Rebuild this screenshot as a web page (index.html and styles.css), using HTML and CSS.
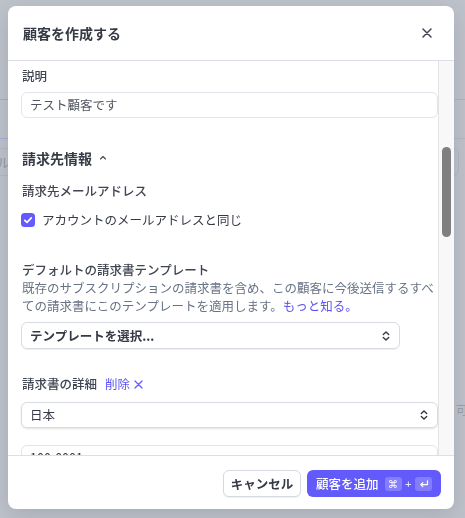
FILE: index.html
```html
<!DOCTYPE html>
<html lang="ja">
<head>
<meta charset="utf-8">
<title>顧客を作成する</title>
<link rel="stylesheet" href="styles.css">
</head>
<body>
<div class="page">
  <div class="bg-rule bg-rule-1"></div>
  <div class="bg-rule bg-rule-2"></div>
  <div class="bg-field">メール</div>
  <div class="bg-note">可</div>
</div>

<div class="modal">
  <header class="modal-header">
    <h1 class="modal-title">顧客を作成する</h1>
    <button class="close-btn" aria-label="閉じる">
      <svg width="10" height="10" viewBox="0 0 10 10"><path d="M1 1L9 9M9 1L1 9" stroke="#414552" stroke-width="1.5" stroke-linecap="round" fill="none"/></svg>
    </button>
  </header>

  <div class="modal-body">
    <div class="scroll-content">
      <div class="field-label">説明</div>
      <div class="text-input">テスト顧客です</div>

      <div class="section-heading">請求先情報
        <svg class="chev-up" width="8" height="5" viewBox="0 0 8 5"><path d="M1.5 4L4 1.5L6.5 4" stroke="#414552" stroke-width="1.1" fill="none" stroke-linecap="round" stroke-linejoin="round"/></svg>
      </div>

      <div class="field-label label-email">請求先メールアドレス</div>
      <label class="check-row">
        <span class="checkbox">
          <svg width="14" height="14" viewBox="0 0 14 14"><path d="M3.8 7.3L6 9.4L10.3 4.8" stroke="#fff" stroke-width="1.7" fill="none" stroke-linecap="round" stroke-linejoin="round"/></svg>
        </span>
        <span class="check-text">アカウントのメールアドレスと同じ</span>
      </label>

      <div class="field-label label-template">デフォルトの請求書テンプレート</div>
      <p class="desc">既存のサブスクリプションの請求書を含め、この顧客に今後送信するすべ<br>ての請求書にこのテンプレートを適用します。<span class="link">もっと知る。</span></p>
      <div class="select select-template">
        <span class="select-text strong">テンプレートを選択...</span>
        <svg class="updown" width="8" height="12" viewBox="0 0 8 12"><path d="M1.3 4.6L4 1.9L6.7 4.6M1.3 7.4L4 10.1L6.7 7.4" stroke="#353a44" stroke-width="1.4" fill="none" stroke-linecap="round" stroke-linejoin="round"/></svg>
      </div>

      <div class="details-row">
        <span class="field-label">請求書の詳細</span>
        <span class="link remove">削除</span>
        <svg class="remove-x" width="9" height="9" viewBox="0 0 9 9"><path d="M1 1L8 8M8 1L1 8" stroke="#635bff" stroke-width="1.3" stroke-linecap="round" fill="none"/></svg>
      </div>
      <div class="select select-country">
        <span class="select-text">日本</span>
        <svg class="updown" width="8" height="12" viewBox="0 0 8 12"><path d="M1.3 4.6L4 1.9L6.7 4.6M1.3 7.4L4 10.1L6.7 7.4" stroke="#353a44" stroke-width="1.4" fill="none" stroke-linecap="round" stroke-linejoin="round"/></svg>
      </div>
      <div class="text-input postal">100-0001</div>
    </div>
    <div class="scrollbar"><div class="thumb"></div></div>
  </div>

  <footer class="modal-footer">
    <button class="btn btn-secondary">キャンセル</button>
    <button class="btn btn-primary">
      <span class="btn-label">顧客を追加</span>
      <span class="kbd kbd-cmd">⌘</span>
      <span class="plus">+</span>
      <span class="kbd">
        <svg width="10" height="8" viewBox="0 0 10 8"><path d="M8.5 0.8V4.6H1.8M3.8 2.6L1.8 4.6L3.8 6.6" stroke="#fff" stroke-width="1.2" fill="none" stroke-linecap="round" stroke-linejoin="round"/></svg>
      </span>
    </button>
  </footer>
</div>
</body>
</html>
```

FILE: styles.css
```css
* {
  box-sizing: border-box;
  margin: 0;
  padding: 0;
}

html, body {
  width: 465px;
  height: 518px;
  overflow: hidden;
}

body {
  background: #bec3cb;
  font-family: "Noto Sans CJK JP", "Noto Sans", sans-serif;
  font-size: 12.5px;
  color: #353a44;
}

/* page behind the overlay */
.page {
  height: 518px;
  display: flex;
  flex-direction: column;
}

.bg-rule {
  height: 1px;
  flex: none;
}

.bg-rule-1 {
  margin-top: 99px;
  background: linear-gradient(to right, #a6a9d6 0, #a6a9d6 40px, #b0b5be 40px);
}

.bg-rule-2 {
  margin-top: 38px;
  background: linear-gradient(to right, #aaadd4 0, #aaadd4 40px, #b3b8c1 40px);
}

.bg-field {
  flex: none;
  margin-top: 9px;
  margin-left: -40px;
  width: 499px;
  height: 28px;
  border: 1px solid #b3b8c1;
  border-radius: 6px;
  color: #959ba6;
  font-size: 13px;
  line-height: 26px;
  padding-left: 10px;
}

.bg-note {
  flex: none;
  margin-top: 227px;
  margin-left: 456px;
  color: #99a0ab;
  font-size: 12px;
  line-height: 14px;
}

/* modal */
.modal {
  position: fixed;
  left: 8px;
  top: 6px;
  width: 446px;
  height: 503px;
  background: #fff;
  border-radius: 8px;
  display: flex;
  flex-direction: column;
  overflow: hidden;
  box-shadow: 0 6px 22px rgba(40, 45, 60, 0.16);
}

.modal-header {
  flex: none;
  height: 55px;
  display: flex;
  align-items: center;
  justify-content: space-between;
  padding: 0 22px 0 15px;
  border-bottom: 1px solid #dcdfe5;
}

.modal-title {
  font-size: 14px;
  font-weight: 700;
  line-height: 20px;
  color: #353a44;
}

.close-btn {
  border: 0;
  background: none;
  width: 10px;
  height: 10px;
  display: flex;
}

.modal-body {
  flex: 1;
  min-height: 0;
  display: flex;
}

.scroll-content {
  flex: 1;
  min-width: 0;
  overflow: hidden;
  padding: 6px 0 0 13px;
  display: flex;
  flex-direction: column;
}

.scrollbar {
  flex: none;
  width: 16px;
  background: #f8f8f8;
  border-left: 1px solid #e4e4e4;
}

.thumb {
  margin-top: 86px;
  margin-left: 3px;
  width: 9px;
  height: 90px;
  border-radius: 5px;
  background: #7f7f7f;
}

.field-label {
  flex: none;
  line-height: 18px;
  padding-left: 1px;
  color: #414552;
  font-weight: 500;
}

.text-input {
  flex: none;
  margin-top: 7px;
  height: 26px;
  border: 1px solid #e1e4e9;
  border-radius: 6px;
  padding-left: 8px;
  line-height: 24px;
  color: #50555f;
  font-size: 12.5px;
}

.section-heading {
  flex: none;
  margin-top: 30px;
  line-height: 20px;
  font-size: 14px;
  font-weight: 700;
  color: #353a44;
  padding-left: 1px;
  display: flex;
  align-items: center;
}

.chev-up {
  margin-left: 7px;
  margin-top: -2px;
}

.label-email {
  margin-top: 14px;
}

.check-row {
  flex: none;
  margin-top: 11px;
  height: 18px;
  display: flex;
  align-items: center;
  gap: 7px;
}

.checkbox {
  width: 14px;
  height: 14px;
  border-radius: 3.5px;
  background: #635bff;
  display: flex;
}

.check-text {
  line-height: 18px;
  color: #353a44;
}

.label-template {
  margin-top: 32px;
}

.desc {
  flex: none;
  line-height: 18px;
  padding-left: 1px;
  color: #687385;
}

.link {
  color: #5b54f5;
}

.select {
  flex: none;
  margin-top: 7px;
  height: 27px;
  border: 1px solid #d8dce2;
  border-radius: 6px;
  padding: 0 9px 0 8px;
  display: flex;
  align-items: center;
  justify-content: space-between;
  box-shadow: 0 1px 1px rgba(0, 0, 0, 0.07);
}

.select-template {
  width: 379px;
}

.select-text {
  line-height: 18px;
  color: #353a44;
}

.select-text.strong {
  font-weight: 700;
}

.details-row {
  flex: none;
  margin-top: 26px;
  height: 18px;
  display: flex;
  align-items: center;
}

.remove {
  margin-left: 8px;
  line-height: 18px;
}

.remove-x {
  margin-left: 4px;
}

.select-country {
  margin-top: 9px;
  height: 26px;
  box-shadow: 0 1px 2px rgba(0, 0, 0, 0.12);
}

.postal {
  margin-top: 17px;
  color: #353a44;
}

/* footer */
.modal-footer {
  flex: none;
  height: 54px;
  border-top: 1px solid #dcdfe5;
  padding: 14px 13px 0;
  display: flex;
  justify-content: flex-end;
  align-items: flex-start;
  gap: 6px;
}

.btn {
  flex: none;
  height: 27px;
  border-radius: 6px;
  font-family: inherit;
  font-size: 12.5px;
  line-height: 18px;
  white-space: nowrap;
  display: flex;
  align-items: center;
}

.btn-secondary {
  width: 78px;
  justify-content: center;
  background: #fff;
  border: 1px solid #d5d9e0;
  color: #353a44;
  font-weight: 700;
  box-shadow: 0 1px 1px rgba(0, 0, 0, 0.06);
}

.btn-primary {
  width: 134px;
  border: 0;
  background: #625afa;
  color: #fff;
  font-weight: 500;
  padding: 0 8px 0 9px;
}

.btn-label {
  flex: none;
  white-space: nowrap;
}

.kbd {
  flex: none;
  width: 17px;
  height: 14px;
  border-radius: 3px;
  background: rgba(255, 255, 255, 0.22);
  display: flex;
  align-items: center;
  justify-content: center;
}

.kbd-cmd {
  margin-left: 6px;
  font-family: "DejaVu Sans", sans-serif;
  font-size: 10.5px;
  line-height: 14px;
}

.plus {
  flex: none;
  margin: 0 3px;
  font-family: "DejaVu Sans", sans-serif;
  font-size: 9px;
  line-height: 14px;
}
```
